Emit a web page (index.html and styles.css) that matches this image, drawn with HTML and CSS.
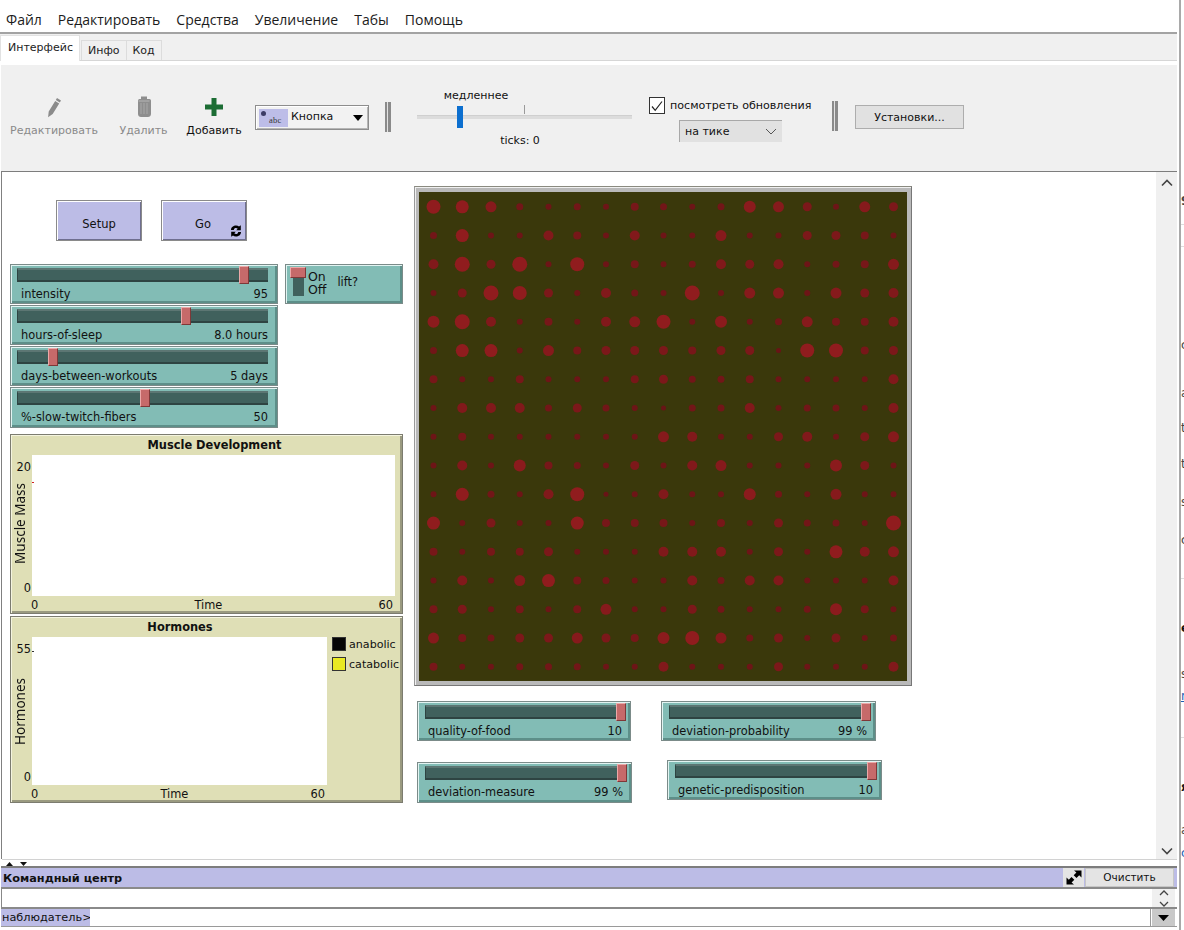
FILE: index.html
```html
<!DOCTYPE html>
<html lang="ru">
<head>
<meta charset="utf-8">
<title>NetLogo</title>
<link rel="stylesheet" href="styles.css">
</head>
<body>
<div class="app">
  <div class="window">
    <nav class="menu">
      <span>Файл</span><span>Редактировать</span><span>Средства</span><span>Увеличение</span><span>Табы</span><span>Помощь</span>
    </nav>
    <div class="tabs">
      <span class="tab tab-active">Интерфейс</span><span class="tab">Инфо</span><span class="tab">Код</span>
    </div>
    <div class="toolbar">
      <div class="tool tool-edit is-disabled">
        <svg class="tool-icon" width="24" height="24" viewBox="0 0 24 24"><path d="M15 3l4 2.400-1.200 2.100-4-2.400zM13.200 6l4 2.400-6.500 10.600-4.600 3.200.6-5.600z" fill="#8b8b8b"/></svg>
        <span>Редактировать</span>
      </div>
      <div class="tool tool-delete is-disabled">
        <svg class="tool-icon" width="24" height="24" viewBox="0 0 24 24"><path d="M9 1.500h6V4h2.500c1.200.4 1.500 1 1.500 2v13c0 2-1.500 3-3 3H9c-1.600 0-3-1-3-3V6c0-1 .3-1.600 1.500-2H9z" fill="#8e8e8e"/><path d="M9 8v11M12 8v11M15 8v11" stroke="#a8a8a8" stroke-width="1"/><path d="M6.500 6h11" stroke="#b5b5b5"/></svg>
        <span>Удалить</span>
      </div>
      <div class="tool tool-add">
        <svg class="tool-icon" width="24" height="24" viewBox="0 0 24 24"><path d="M9.500 3h5v6.500H21v5h-6.500V21h-5v-6.500H3v-5h6.500z" fill="#1c6d34"/></svg>
        <span>Добавить</span>
      </div>
      <div class="widget-picker">
        <span class="picker-icon"><i class="picker-dot"></i><span class="picker-abc">abc</span></span>
        <span class="picker-label">Кнопка</span>
        <svg class="picker-arrow" width="10" height="6" viewBox="0 0 10 6"><path d="M0 0h10L5 6z" fill="#000"/></svg>
      </div>
      <div class="sep sep-a"></div>
      <div class="speed">
        <div class="speed-label">медленнее</div>
        <div class="speed-slider"><i class="speed-tick"></i><i class="speed-track"></i><i class="speed-thumb"></i></div>
        <div class="ticks">ticks: 0</div>
      </div>
      <div class="updates">
        <div class="update-check">
          <span class="checkbox"><svg width="14" height="14" viewBox="0 0 14 14"><path d="M2 7.500l3.200 3.800L12 2.500" fill="none" stroke="#222" stroke-width="1.200"/></svg></span>
          <span>посмотреть обновления</span>
        </div>
        <div class="update-select">
          <span>на тике</span>
          <svg width="12" height="7" viewBox="0 0 12 7"><path d="M1 1l5 5 5-5" fill="none" stroke="#555" stroke-width="1"/></svg>
        </div>
      </div>
      <div class="sep sep-b"></div>
      <div class="settings-btn">Установки...</div>
    </div>

    <div class="workspace">
      <div class="canvas">
        <div class="nl-btn btn-setup">Setup</div>
        <div class="nl-btn btn-go">Go
          <svg class="go-icon" width="12" height="12" viewBox="0 0 12 12"><path d="M1 5C1 2 3.500.5 6 .5c1.300 0 2.300.4 3 1.100L10.800.3V5.200H6.200l1.500-1.500C7.300 3.300 6.700 3 6 3 4.800 3 4 3.600 3.800 5zM11 7c0 3-2.500 4.500-5 4.500-1.300 0-2.300-.4-3-1.100l-1.800 1.300V6.800h4.600L4.300 8.300c.4.400 1 .7 1.700.7 1.200 0 2-.6 2.200-2z" fill="#000"/></svg>
        </div>

        <div class="nl-slider s-intensity">
          <div class="track"><i class="thumb" style="left:88.400%"></i></div>
          <div class="slider-text"><span>intensity</span><span>95</span></div>
        </div>
        <div class="nl-slider s-sleep">
          <div class="track"><i class="thumb" style="left:65%"></i></div>
          <div class="slider-text"><span>hours-of-sleep</span><span>8.0 hours</span></div>
        </div>
        <div class="nl-slider s-days">
          <div class="track"><i class="thumb" style="left:12%"></i></div>
          <div class="slider-text"><span>days-between-workouts</span><span>5 days</span></div>
        </div>
        <div class="nl-slider s-fibers">
          <div class="track"><i class="thumb" style="left:48.600%"></i></div>
          <div class="slider-text"><span>%-slow-twitch-fibers</span><span>50</span></div>
        </div>

        <div class="nl-switch">
          <div class="switch-rail"><i class="switch-knob"></i></div>
          <div class="switch-states"><span>On</span><span>Off</span></div>
          <div class="switch-name">lift?</div>
        </div>

        <div class="plot plot-muscle">
          <div class="plot-title">Muscle Development</div>
          <div class="plot-y"><span>20</span><span class="plot-ylabel">Muscle Mass</span><span>0</span></div>
          <div class="plot-area"><i class="pen pen-red"></i></div>
          <div class="plot-x"><span>0</span><span>Time</span><span>60</span></div>
        </div>

        <div class="plot plot-hormones">
          <div class="plot-title">Hormones</div>
          <div class="plot-y"><span>55</span><span class="plot-ylabel">Hormones</span><span>0</span></div>
          <div class="plot-area"><i class="pen pen-black"></i></div>
          <div class="plot-legend">
            <div class="legend-row"><i class="swatch swatch-black"></i>anabolic</div>
            <div class="legend-row"><i class="swatch swatch-yellow"></i>catabolic</div>
          </div>
          <div class="plot-x"><span>0</span><span>Time</span><span>60</span></div>
        </div>

        <div class="world">
          <svg id="world-svg" class="world-svg" width="488" height="489" viewBox="419 192 488 489"></svg>
        </div>

        <div class="nl-slider s-food s-narrow">
          <div class="track"><i class="thumb" style="left:95%"></i></div>
          <div class="slider-text"><span>quality-of-food</span><span>10</span></div>
        </div>
        <div class="nl-slider s-prob s-narrow">
          <div class="track"><i class="thumb" style="left:95%"></i></div>
          <div class="slider-text"><span>deviation-probability</span><span>99 %</span></div>
        </div>
        <div class="nl-slider s-measure s-narrow">
          <div class="track"><i class="thumb" style="left:95%"></i></div>
          <div class="slider-text"><span>deviation-measure</span><span>99 %</span></div>
        </div>
        <div class="nl-slider s-genetic s-narrow">
          <div class="track"><i class="thumb" style="left:95%"></i></div>
          <div class="slider-text"><span>genetic-predisposition</span><span>10</span></div>
        </div>
      </div>
      <div class="scrollbar">
        <svg width="12" height="8" viewBox="0 0 12 8"><path d="M1 6.500l5-5 5 5" fill="none" stroke="#444" stroke-width="1.600"/></svg>
        <svg width="12" height="8" viewBox="0 0 12 8"><path d="M1 1.500l5 5 5-5" fill="none" stroke="#444" stroke-width="1.600"/></svg>
      </div>
    </div>

    <div class="splitter">
      <svg width="7" height="4" viewBox="0 0 7 4"><path d="M0 4h7L3.500 0z" fill="#111"/></svg>
      <svg width="7" height="4" viewBox="0 0 7 4"><path d="M0 0h7L3.500 4z" fill="#111"/></svg>
    </div>
    <div class="cc-head">
      <span class="cc-title">Командный центр</span>
      <span class="cc-expand"><svg width="16" height="15" viewBox="0 0 16 15"><path d="M8 .5h7.500v7l-2.300-2.200L10.500 8 7.700 5.200l2.700-2.600zM8 14.500H.5v-7l2.300 2.200L5.500 7l2.800 2.800-2.700 2.600z" fill="#000"/></svg></span>
      <span class="cc-clear">Очистить</span>
    </div>
    <div class="cc-output">
      <div class="cc-scroll">
        <svg width="10" height="6" viewBox="0 0 10 6"><path d="M1 5l4-4 4 4" fill="none" stroke="#444" stroke-width="1.300"/></svg>
        <svg width="10" height="6" viewBox="0 0 10 6"><path d="M1 1l4 4 4-4" fill="none" stroke="#444" stroke-width="1.300"/></svg>
      </div>
    </div>
    <div class="cc-input">
      <span class="cc-prompt">наблюдатель&gt;</span>
      <span class="cc-field"></span>
      <span class="cc-drop"><svg width="11" height="6" viewBox="0 0 11 6"><path d="M0 0h11L5.500 6z" fill="#000"/></svg></span>
    </div>
  </div>

  <aside class="behind">
    <span class="b-rule r1"></span><span class="b-rule r2"></span><span class="b-rule r3"></span><span class="b-rule r4"></span>
    <span class="b-text t1">9</span><span class="b-text t2">c</span><span class="b-text t3">a</span><span class="b-text t4">ti</span>
    <span class="b-text t5">t</span><span class="b-text t6">s</span><span class="b-text t7">c</span><span class="b-text t8">e</span>
    <span class="b-text t9">s</span><span class="b-text t10">r</span><span class="b-text t11">я</span><span class="b-text t12">a</span><span class="b-text t13">c</span>
  </aside>
</div>
<script src="world.js"></script>
</body>
</html>
```
FILE: styles.css
```css
* { box-sizing: border-box; }
html, body { margin: 0; padding: 0; background: #fff; }
i { display: block; font-style: normal; }

.app {
  display: flex;
  width: 1184px;
  height: 930px;
  overflow: hidden;
  font-family: "DejaVu Sans", sans-serif;
  color: #111;
}
.window { width: 1177px; display: flex; flex-direction: column; padding-bottom: 3px; }

/* menu */
.menu {
  height: 34px;
  flex: none;
  display: flex;
  gap: 16px;
  align-items: flex-end;
  padding: 0 0 2px 6px;
  border-bottom: 2px solid #a3a3a3;
  font: 14px/20px "Open Sans", sans-serif;
  color: #1c1c1c;
}

/* tabs */
.tabs {
  height: 27px;
  flex: none;
  display: flex;
  align-items: flex-end;
  background: #f0f0f0;
  border-bottom: 1px solid #d6d6d6;
  font-size: 11px;
}
.tab {
  height: 20px;
  padding: 0 6px;
  line-height: 20px;
  border: 1px solid #dcdcdc;
  border-bottom: 0;
  margin-left: -1px;
  color: #222;
}
.tab:nth-child(2) { margin-left: 1px; padding: 0 6px; }
.tab-active {
  height: 26px;
  width: 80px;
  margin: 0 0 -1px 0;
  padding: 0 0 0 7px;
  line-height: 23px;
  background: #fff;
  border-color: #e2e2e2;
}

/* toolbar */
.toolbar {
  height: 107px;
  flex: none;
  margin-top: 4px;
  margin-left: 1px;
  display: flex;
  align-items: flex-start;
  background: #f0f0f0;
  border-bottom: 1px solid #7d7d7d;
  font-size: 11px;
}
.tool {
  display: flex;
  flex-direction: column;
  align-items: center;
  padding-top: 30px;
  white-space: nowrap;
  color: #111;
}
.tool span { margin-top: 5px; line-height: 14px; }
.is-disabled { color: #8a8a8a; }
.tool-edit { margin-left: 9px; width: 88px; }
.tool-delete { margin-left: 22px; width: 47px; }
.tool-add { margin-left: 19px; width: 56px; }

.widget-picker {
  margin: 40px 0 0 13px;
  width: 114px;
  height: 25px;
  display: flex;
  align-items: center;
  padding-left: 3px;
  background: #f2f2f2;
  border: 1px solid #8d8d8d;
  box-shadow: inset 1px 1px 0 #fff, inset -1px -1px 0 #b5b5b5;
}
.picker-icon {
  position: relative;
  width: 29px;
  height: 18px;
  background: #bdbde8;
  flex: none;
}
.picker-dot {
  position: absolute;
  left: 2px;
  top: 2px;
  width: 5px;
  height: 5px;
  border-radius: 50%;
  background: #3c3c66;
}
.picker-abc {
  position: absolute;
  left: 10px;
  top: 6px;
  font: 8.500px/10px "Liberation Serif", serif;
  color: #333;
  letter-spacing: .3px;
}
.picker-label { margin: 0 0 3px 3px; font-size: 11px; }
.picker-arrow { margin-left: auto; margin-right: 5px; }

.sep {
  width: 6px;
  height: 30px;
  background: linear-gradient(90deg, #8a8a8a 0 2px, #e2e2e2 2px 3px, #8a8a8a 3px 6px);
}
.sep-a { margin: 37px 0 0 16px; }
.sep-b { margin: 36px 0 0 20px; }

.speed { margin: 24px 0 0 26px; width: 215px; }
.speed-label { width: 118px; height: 14px; line-height: 14px; text-align: center; font-size: 11px; }
.speed-slider { position: relative; height: 28px; }
.speed-track {
  position: absolute;
  left: 0;
  right: 0;
  top: 12px;
  height: 4px;
  background: #dcdcdc;
  border-top: 1px solid #cfcfcf;
}
.speed-tick { position: absolute; left: 107px; top: 2px; width: 1px; height: 9px; background: #9a9a9a; }
.speed-thumb { position: absolute; left: 40px; top: 3px; width: 6px; height: 22px; background: #0c6fcf; }
.ticks { width: 206px; height: 14px; margin-top: 3px; line-height: 14px; text-align: center; font-size: 11px; }

.updates { margin: 32px 0 0 17px; width: 163px; }
.update-check { display: flex; align-items: center; gap: 5px; height: 17px; font-size: 11.100px; white-space: nowrap; }
.checkbox {
  width: 16px;
  height: 17px;
  display: flex;
  align-items: center;
  justify-content: center;
  background: #fff;
  border: 1px solid #333;
  flex: none;
}
.update-select {
  width: 103px;
  height: 22px;
  margin: 6px 0 0 30px;
  display: flex;
  align-items: center;
  justify-content: space-between;
  padding: 0 5px 0 5px;
  background: #e1e1e1;
  border-left: 1px solid #a8a8a8;
  border-top: 1px solid #a8a8a8;
  font-size: 11px;
}
.settings-btn {
  margin: 40px 0 0 17px;
  width: 109px;
  height: 24px;
  line-height: 23px;
  text-align: center;
  background: #e1e1e1;
  border: 1px solid #adadad;
  font-size: 11px;
}

/* workspace */
.workspace {
  flex: 1;
  min-height: 0;
  margin-left: 1px;
  display: flex;
  border-left: 1px solid #808080;
}
.canvas { position: relative; flex: 1; background: #fff; }
.scrollbar {
  width: 21px;
  flex: none;
  background: #f0f0f0;
  display: flex;
  flex-direction: column;
  align-items: center;
  justify-content: space-between;
  padding: 7px 0 4px;
}

/* NetLogo buttons: canvas coordinates are x-2, y-172 */
.nl-btn {
  position: absolute;
  top: 28px;
  width: 86px;
  height: 41px;
  display: flex;
  align-items: center;
  justify-content: center;
  padding-top: 6px;
  background: #bcbce6;
  border: 1px solid #8a8a8a;
  box-shadow: inset 1px 1px 0 #fff, inset -1px -1px 0 #6f6f90;
  font-size: 11.500px;
}
.btn-setup { left: 54px; }
.btn-go { left: 159px; padding-right: 2px; }
.go-icon { position: absolute; right: 4px; bottom: 3px; }

/* sliders */
.nl-slider {
  position: absolute;
  display: flex;
  flex-direction: column;
  padding: 3px 9px 0 6px;
  background: #82bcb5;
  border: 1px solid #7b8b89;
  box-shadow: inset 1px 1px 0 #e2f4f2, inset -2px -2px 0 #5d8f89;
  font-size: 11.400px;
}
.s-narrow { padding: 3px 4px 0 7px; }
.s-narrow .slider-text { padding: 0 4px 0 3px; }
.s-intensity { left: 8px; top: 92px; width: 268px; height: 40px; }
.s-sleep { left: 8px; top: 133px; width: 268px; height: 40px; }
.s-days { left: 8px; top: 174px; width: 268px; height: 40px; }
.s-fibers { left: 8px; top: 215px; width: 268px; height: 41px; }
.s-food { left: 415px; top: 529px; width: 214px; height: 40px; }
.s-prob { left: 659px; top: 529px; width: 215px; height: 40px; }
.s-measure { left: 415px; top: 590px; width: 215px; height: 41px; }
.s-genetic { left: 665px; top: 588px; width: 215px; height: 40px; }

.track {
  position: relative;
  height: 14px;
  background: #40615d;
  border-top: 2px solid #5c7673;
  border-bottom: 2px solid #2e4442;
  border-left: 1px solid #2e4442;
}
.thumb {
  position: absolute;
  top: -4px;
  width: 10px;
  height: 18px;
  background: #c66a6a;
  border: 1px solid #7e3838;
  border-top-color: #eba9a9;
  border-left-color: #eba9a9;
}
.slider-text {
  display: flex;
  justify-content: space-between;
  margin-top: 5px;
  padding: 0 0 0 4px;
  line-height: 15px;
  white-space: nowrap;
}

/* switch */
.nl-switch {
  position: absolute;
  left: 283px;
  top: 92px;
  width: 118px;
  height: 40px;
  display: flex;
  padding: 3px 0 0 5px;
  background: #82bcb5;
  border: 1px solid #7b8b89;
  box-shadow: inset 1px 1px 0 #e2f4f2, inset -2px -2px 0 #5d8f89;
  font-size: 11.400px;
}
.switch-rail { position: relative; width: 11px; height: 28px; margin: 0 0 0 2px; background: #40615d; }
.switch-knob {
  position: absolute;
  left: -3px;
  top: -1px;
  width: 16px;
  height: 11px;
  background: #c66a6a;
  border: 1px solid #7e3838;
  border-top-color: #eba9a9;
  border-left-color: #eba9a9;
}
.switch-states { display: flex; flex-direction: column; margin: 2px 0 0 4px; font-size: 12.500px; line-height: 13px; }
.switch-name { margin: 7px 0 0 11px; line-height: 15px; }

/* plots */
.plot {
  position: absolute;
  left: 8px;
  width: 393px;
  display: grid;
  grid-template-rows: 20px 1fr 17px;
  background: #dfdfb6;
  border: 1px solid #7c7c70;
  box-shadow: inset 1px 1px 0 #f4f4df, inset -2px -2px 0 #9a9a80;
  font-size: 11.400px;
}
.plot-muscle { top: 262px; height: 180px; grid-template-columns: 21px 363px 1fr; }
.plot-hormones { top: 444px; height: 187px; grid-template-columns: 21px 295px 1fr; }
.plot-title {
  grid-column: 1 / -1;
  padding-left: 16px;
  line-height: 20px;
  text-align: center;
  font-weight: 700;
  font-size: 11.400px;
}
.plot-hormones .plot-title { padding: 0 76px 0 23px; }
.plot-y {
  display: flex;
  flex-direction: column;
  justify-content: space-between;
  align-items: flex-end;
  padding: 5px 1px 0 0;
  line-height: 15px;
}
.plot-ylabel {
  align-self: flex-start;
  margin: 0 0 10px 1px;
  writing-mode: vertical-rl;
  transform: rotate(180deg);
  font: 13.500px/16px "Noto Sans", sans-serif;
}
.plot-hormones .plot-ylabel { margin-bottom: 4px; }
.plot-area { position: relative; background: #fff; }
.pen { position: absolute; left: 0; width: 2px; height: 1px; }
.pen-red { top: 27px; background: #d02020; }
.pen-black { top: 14px; background: #333; }
.plot-x {
  grid-row: 3;
  grid-column: 1 / 3;
  display: flex;
  justify-content: space-between;
  padding: 1px 2px 0 20px;
  line-height: 16px;
}
.plot-muscle .plot-x { grid-column: 1 / 4; padding-right: 9px; }
.plot-legend {
  grid-row: 2 / 4;
  grid-column: 3;
  padding: 0 0 0 5px;
  font-size: 11.100px;
}
.legend-row { display: flex; align-items: center; gap: 3px; height: 14px; margin-bottom: 6px; white-space: nowrap; }
.swatch { width: 14px; height: 14px; border: 1px solid #333; flex: none; }
.swatch-black { background: #050505; }
.swatch-yellow { background: #e9e923; }

/* world */
.world {
  position: absolute;
  left: 412px;
  top: 14px;
  width: 498px;
  height: 500px;
  padding: 5px 4px 4px 4px;
  background: #b9b9b9;
  border: 1px solid;
  border-color: #8a8a80 #777 #777 #999;
  box-shadow: inset 1px 1px 0 #f0f0f0;
}
.world-svg { display: block; background: #3a380b; filter: blur(.4px); }

/* command center */
.splitter {
  height: 7px;
  flex: none;
  margin-left: 2px;
  display: flex;
  gap: 7px;
  align-items: flex-start;
  padding: 1px 0 0 4px;
  background: #fff;
  border-top: 1px solid #d2d2d2;
}
.splitter svg { margin-top: 1px; }
.cc-head {
  height: 23px;
  flex: none;
  margin-left: 1px;
  display: flex;
  align-items: center;
  padding-left: 2px;
  background: #bcbce6;
  border-top: 2px solid #7d7d7d;
  border-bottom: 2px solid #8a8a8a;
  position: relative;
}
.cc-title { padding-top: 2px; font-size: 11.300px; font-weight: 700; flex: 1; }
.cc-expand {
  width: 21px;
  height: 19px;
  margin-right: 1px;
  display: flex;
  align-items: center;
  justify-content: center;
  background: #e4e4e4;
}
.cc-clear {
  width: 89px;
  height: 19px;
  margin-right: 3px;
  line-height: 17px;
  text-align: center;
  font-size: 10.500px;
  background: #e4e4e4;
  border: 1px solid #c6c6c6;
}
.cc-output {
  height: 18px;
  flex: none;
  margin-left: 1px;
  display: flex;
  justify-content: flex-end;
  background: #fff;
  border-left: 1px solid #888;
}
.cc-scroll {
  width: 23px;
  margin-right: 2px;
  display: flex;
  flex-direction: column;
  align-items: center;
  justify-content: space-between;
  padding: 1px 0 0;
  background: #f0f0f0;
}
.cc-input {
  height: 20px;
  flex: none;
  margin-left: 1px;
  display: flex;
  border-top: 2px solid #8a8a8a;
  border-bottom: 1px solid #9a9a9a;
  font-size: 11.300px;
  line-height: 17px;
}
.cc-prompt { width: 89px; padding-left: 1px; background: #bcbce6; white-space: nowrap; }
.cc-field { flex: 1; background: #fff; border-right: 1px solid #9a9a9a; }
.cc-drop {
  width: 23px;
  margin: 0 2px 0 1px;
  display: flex;
  align-items: center;
  justify-content: center;
  background: #c9c9c9;
}

/* window behind, visible at the right edge */
.behind {
  position: relative;
  flex: 1;
  background: #fff;
  border-left: 2px solid #a9a9a9;
  margin-left: 2px;
  overflow: hidden;
  font-size: 12px;
  color: #444;
}
.b-rule { position: absolute; left: 0; right: 0; height: 1px; background: #ddd; }
.r1 { top: 224px; } .r2 { top: 246px; } .r3 { top: 578px; } .r4 { top: 737px; }
.b-text { position: absolute; left: 0; line-height: 14px; }
.t1 { top: 194px; font-weight: 700; } .t2 { top: 338px; } .t3 { top: 386px; } .t4 { top: 421px; }
.t5 { top: 457px; } .t6 { top: 495px; } .t7 { top: 533px; }
.t8 { top: 621px; font-weight: 700; color: #111; } .t9 { top: 667px; }
.t10 { top: 689px; color: #1a5fb4; text-decoration: underline; }
.t11 { top: 780px; font-weight: 700; color: #111; } .t12 { top: 823px; } .t13 { top: 846px; color: #1a5fb4; }
```
FILE: world.js
```js
// Radius of the turtle on each patch of the 17 x 17 world.
var RADII = [
  [7,6.5,5.5,3.5,3,3.5,3,4,3.5,3,3.5,6,5.5,4.5,3,5.5,4.5],
  [3.5,6.5,3,3,5,4,3,5,3,3,5.5,3,3,4.5,4.5,4,3],
  [5,7.5,4.5,7.5,3,7,3,4,3,3.5,5,4.5,5,3,3.5,4,5.5],
  [3,4.5,7.5,7,4.5,3,5,3.5,3,7.5,3,5.5,5.5,3,5.5,4.5,5],
  [6,7.5,5,3,4,3,5,5.5,7,3,6,3,3.5,5.5,4,4,5],
  [3.5,6.5,6.5,3,5.5,4,4.5,4.5,4.5,4,4.5,4.5,2.5,7,7,4,4.5],
  [4,3,3,4,3,3,3,4,4.5,3.5,3.5,4,3,3,3,3,5],
  [3,5,5,5,3.5,4.5,3.5,3,2.5,3.5,3.5,5,3,3.5,3.5,3,5],
  [3,4,3,3,3,3,3,3,5.5,5,3,3,4.5,5,3,4.5,5.5],
  [3,5,3,6,4,3.5,3,4.5,3,5,5.5,3,3,3,6,4.5,3],
  [3,6.5,3.5,3,5,7,2.5,3,5,3,3,6,3.5,3,5.5,3,3],
  [6.5,3,4.5,3,3,6.5,4,4,4,3,4,3,4.5,3.5,3.5,3,7.5],
  [4,3,4,4,4.5,3,3,3,5,5,5,3,4.5,3,6.5,5,5.5],
  [3,5,3,5.5,6.5,4,3.5,3,3,5,3.5,5,5,3,3,3,5],
  [4,4.5,3,4,3,4,5.5,3,3,4.5,3.5,3,3,3.5,6,4,3],
  [5.5,4,3.5,4.5,4.5,5.5,4.5,4,6,7,5.5,3.5,4.5,3,4.5,3,3.5],
  [4,3,3,3.5,3.5,3.5,3,3,5,3,3,3,4.5,3,3,3,5]
];
var SVG_NS = "http://www.w3.org/2000/svg";
var svg = document.getElementById("world-svg");
RADII.forEach(function (row, y) {
  row.forEach(function (r, x) {
    var c = document.createElementNS(SVG_NS, "circle");
    var t = Math.min(1, Math.max(0, (r - 2.5) / 4));
    c.setAttribute("cx", 433.5 + 28.75 * x);
    c.setAttribute("cy", 206.8 + 28.75 * y);
    c.setAttribute("r", r);
    c.setAttribute("fill", "rgb(" + Math.round(104 + 40 * t) + "," + Math.round(20 + 8 * t) + "," + Math.round(22 + 8 * t) + ")");
    svg.appendChild(c);
  });
});
```
